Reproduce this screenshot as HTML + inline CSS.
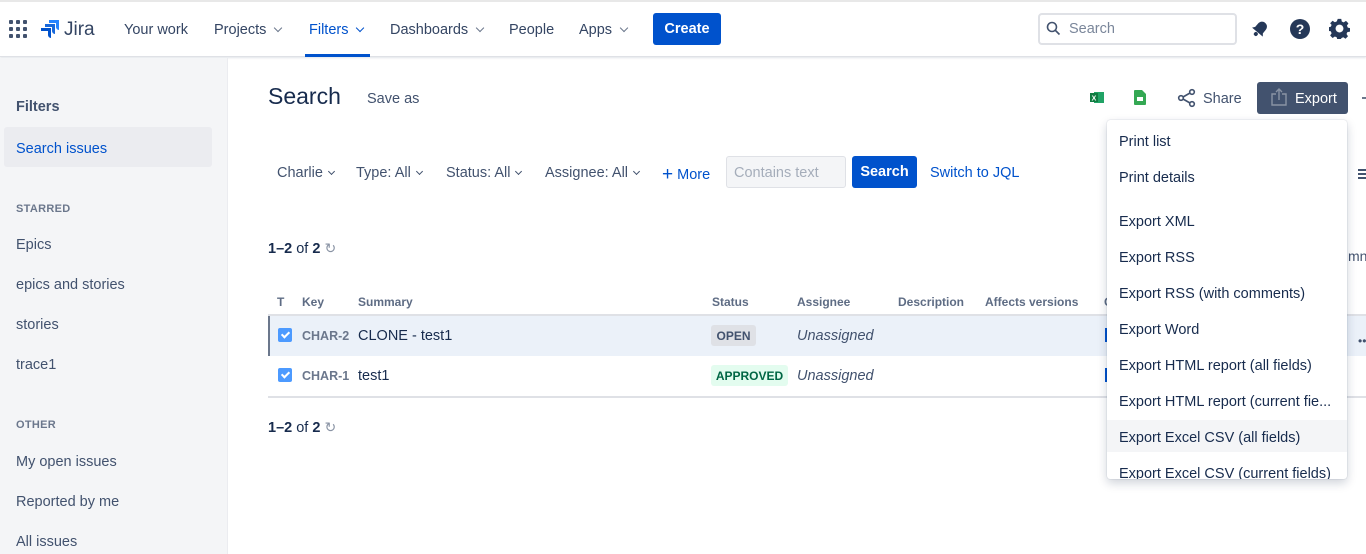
<!DOCTYPE html>
<html><head><meta charset="utf-8"><style>
*{box-sizing:border-box;margin:0;padding:0}
body{width:1366px;height:554px;overflow:hidden;background:#fff;font-family:"Liberation Sans",sans-serif;color:#172b4d;position:relative;font-size:14px}
.a{position:absolute;white-space:nowrap}
.hdr{position:absolute;left:0;top:0;width:1366px;height:57px;background:#fff;border-bottom:1px solid #dfe1e6;box-shadow:0 1px 2px rgba(9,30,66,.12);border-top:2px solid #e8e8e8}
.nav{font-size:14.5px;color:#344563;top:22px}
.chev{display:inline-block;width:6px;height:6px;border-right:1.6px solid #6b778c;border-bottom:1.6px solid #6b778c;transform:rotate(45deg);margin-left:9px;position:relative;top:-3px}
.side{position:absolute;left:0;top:58px;width:228px;height:496px;background:#f4f5f7;border-right:1px solid #ebecf0}
.si{left:16px;font-size:14.5px;color:#42526e;transform:translateY(1px)}
.sh{left:16px;font-size:11px;font-weight:bold;color:#6b778c;letter-spacing:.3px;transform:translateY(1px)}
.fl{font-size:14.5px;color:#42526e;top:165px}
.fl .chev{border-color:#42526e;width:5px;height:5px;margin-left:6px}
.th{top:295px;font-size:12px;font-weight:bold;color:#5e6c84}
.dd{position:absolute;left:1107px;top:120px;width:240px;height:359px;background:#fff;border-radius:3px;box-shadow:0 4px 10px rgba(9,30,66,.2),0 0 1px rgba(9,30,66,.3);overflow:hidden}
.di{position:absolute;left:12px;font-size:14.5px;color:#172b4d;transform:translateY(1px)}
.cb{position:absolute;width:14px;height:14px;background:#4c9aff;border-radius:2px}
.cb:after{content:"";position:absolute;left:4.5px;top:2px;width:3px;height:6px;border-right:2px solid #fff;border-bottom:2px solid #fff;transform:rotate(45deg)}
</style></head><body>
<div class="hdr"></div>
<svg class="a" style="left:9px;top:20px" width="18" height="18" viewBox="0 0 18 18" fill="#42526e"><rect x="0" y="0" width="4" height="4" rx="1"/><rect x="7" y="0" width="4" height="4" rx="1"/><rect x="14" y="0" width="4" height="4" rx="1"/><rect x="0" y="7" width="4" height="4" rx="1"/><rect x="7" y="7" width="4" height="4" rx="1"/><rect x="14" y="7" width="4" height="4" rx="1"/><rect x="0" y="14" width="4" height="4" rx="1"/><rect x="7" y="14" width="4" height="4" rx="1"/><rect x="14" y="14" width="4" height="4" rx="1"/></svg>
<svg class="a" style="left:40px;top:19px" width="20" height="20" viewBox="0 0 20 20" fill="#2684ff"><path d="M9 1h10v10a3 3 0 0 1-3-3V4H9z"/><path d="M5 5h10v10a3 3 0 0 1-3-3V8H5z" fill="#1868db"/><path d="M1 9h10v10a3 3 0 0 1-3-3v-4H1z" fill="#0052cc"/></svg>
<div class="a" style="left:64px;top:19px;font-size:19px;color:#344563">Jira</div>
<div class="a nav" style="left:124px">Your work</div>
<div class="a nav" style="left:214px">Projects<span class="chev"></span></div>
<div class="a nav" style="left:309px;color:#0052cc">Filters<span class="chev" style="border-color:#0052cc"></span></div>
<div class="a" style="left:305px;top:54px;width:65px;height:3px;background:#0052cc"></div>
<div class="a nav" style="left:390px">Dashboards<span class="chev"></span></div>
<div class="a nav" style="left:509px">People</div>
<div class="a nav" style="left:579px">Apps<span class="chev"></span></div>
<div class="a" style="left:653px;top:13px;width:68px;height:32px;background:#0052cc;border-radius:3px;color:#fff;font-size:14.5px;font-weight:bold;text-align:center;line-height:33px">Create</div>
<div class="a" style="left:1038px;top:13px;width:199px;height:32px;border:2px solid #dfe1e6;border-radius:4px;background:#fff"></div>
<svg class="a" style="left:1046px;top:21px" width="15" height="15" viewBox="0 0 15 15" fill="none" stroke="#42526e" stroke-width="1.6"><circle cx="6" cy="6" r="4.5"/><path d="M9.5 9.5l4 4"/></svg>
<div class="a" style="left:1069px;top:21px;font-size:14.5px;color:#7a869a">Search</div>
<svg class="a" style="left:1250px;top:19px" width="20" height="20" viewBox="0 0 20 20" fill="#253858"><g transform="rotate(40 10 10)"><path d="M10 2c3.3 0 5 2.5 5 5.5v4l2 2.5H3l2-2.5v-4C5 4.5 6.7 2 10 2z"/><circle cx="10" cy="16.5" r="2"/></g></svg>
<svg class="a" style="left:1289px;top:18px" width="22" height="22" viewBox="0 0 22 22"><circle cx="11" cy="11" r="10" fill="#253858"/><text x="11" y="16" fill="#fff" font-family="Liberation Sans" font-weight="bold" font-size="14" text-anchor="middle">?</text></svg>
<svg class="a" style="left:1329px;top:18px" width="21" height="21" viewBox="0 0 24 24"><path fill="#253858" d="M10 1h4l.6 3 2.2 1 2.6-1.7 2.8 2.8L20.5 8.7l1 2.3 2.5.5v4l-3 .6-1 2.2 1.7 2.6-2.8 2.8-2.6-1.7-2.2 1-.6 2h-4l-.6-2.9-2.2-1-2.6 1.7-2.8-2.8 1.7-2.6-1-2.2-3-.6v-4l3-.6 1-2.2L1.3 6l2.8-2.8 2.6 1.7 2.2-1z"/><circle cx="12" cy="12" r="4.5" fill="#fff"/></svg>

<div class="side"></div>
<div class="a" style="left:16px;top:99px;font-size:14.5px;font-weight:bold;color:#42526e">Filters</div>
<div class="a" style="left:4px;top:127px;width:208px;height:40px;background:#ebecf0;border-radius:3px"></div>
<div class="a si" style="top:140px;color:#0052cc">Search issues</div>
<div class="a sh" style="top:202px">STARRED</div>
<div class="a si" style="top:236px">Epics</div>
<div class="a si" style="top:276px">epics and stories</div>
<div class="a si" style="top:316px">stories</div>
<div class="a si" style="top:356px">trace1</div>
<div class="a sh" style="top:418px">OTHER</div>
<div class="a si" style="top:453px">My open issues</div>
<div class="a si" style="top:493px">Reported by me</div>
<div class="a si" style="top:533px">All issues</div>

<div class="a" style="left:268px;top:83px;font-size:23px;color:#172b4d">Search</div>
<div class="a" style="left:367px;top:91px;font-size:14.5px;color:#42526e">Save as</div>
<svg class="a" style="left:1090px;top:91px" width="14" height="13" viewBox="0 0 14 13"><rect x="4" y="1" width="10" height="11" fill="#21a366"/><rect x="0" y="2" width="8" height="9" fill="#107c41"/><text x="4" y="9.5" font-size="7" fill="#fff" font-family="Liberation Sans" font-weight="bold" text-anchor="middle">X</text></svg>
<svg class="a" style="left:1134px;top:90px" width="12" height="15" viewBox="0 0 12 15"><path d="M0 1a1 1 0 0 1 1-1h7l4 4v10a1 1 0 0 1-1 1H1a1 1 0 0 1-1-1z" fill="#34a853"/><rect x="3" y="7" width="6" height="4" fill="#fff"/></svg>
<svg class="a" style="left:1177px;top:88px" width="20" height="20" viewBox="0 0 20 20" fill="none" stroke="#42526e" stroke-width="1.6"><circle cx="15" cy="4" r="2.3"/><circle cx="4" cy="10" r="2.3"/><circle cx="15" cy="16" r="2.3"/><path d="M6 9l7-4M6 11l7 4"/></svg>
<div class="a" style="left:1203px;top:91px;font-size:14.5px;color:#42526e">Share</div>
<div class="a" style="left:1257px;top:82px;width:91px;height:32px;background:#42526e;border-radius:3px"></div>
<svg class="a" style="left:1271px;top:88px" width="16" height="18" viewBox="0 0 16 18" fill="none" stroke="#8993a4" stroke-width="1.4"><path d="M5 6H1v11h14V6h-4M8 12V1M5 4l3-3 3 3"/></svg>
<div class="a" style="left:1295px;top:91px;font-size:14.5px;color:#fff">Export</div>
<div class="a" style="left:1362px;top:97px;width:4px;height:2px;background:#6b778c"></div>

<div class="a fl" style="left:277px">Charlie<span class="chev"></span></div>
<div class="a fl" style="left:356px">Type: All<span class="chev"></span></div>
<div class="a fl" style="left:446px">Status: All<span class="chev"></span></div>
<div class="a fl" style="left:545px">Assignee: All<span class="chev"></span></div>
<div class="a fl" style="left:662px;color:#0052cc;top:163px"><span style="font-size:19px;position:relative;top:1px">+</span> More</div>
<div class="a" style="left:726px;top:156px;width:120px;height:32px;background:#f4f5f7;border:1px solid #dfe1e6;border-radius:3px"></div>
<div class="a" style="left:734px;top:165px;font-size:14.5px;color:#a5adba">Contains text</div>
<div class="a" style="left:852px;top:156px;width:65px;height:32px;background:#0052cc;border-radius:3px;color:#fff;font-weight:bold;font-size:14.5px;text-align:center;line-height:33px">Search</div>
<div class="a" style="left:930px;top:165px;font-size:14.5px;color:#0052cc">Switch to JQL</div>
<div class="a" style="left:1358px;top:169px;width:8px;height:2px;background:#42526e;box-shadow:0 4px 0 #42526e,0 8px 0 #42526e"></div>

<div class="a" style="left:268px;top:240px;font-size:14.5px"><b>1–2</b> of <b>2</b> <span style="color:#8993a4;font-size:14px">↻</span></div>
<div class="a" style="left:1348px;top:248px;font-size:14px;color:#42526e">mn</div>

<div class="a th" style="left:277px">T</div>
<div class="a th" style="left:302px">Key</div>
<div class="a th" style="left:358px">Summary</div>
<div class="a th" style="left:712px">Status</div>
<div class="a th" style="left:797px">Assignee</div>
<div class="a th" style="left:898px">Description</div>
<div class="a th" style="left:985px">Affects versions</div>
<div class="a th" style="left:1104px">C</div>
<div class="a" style="left:268px;top:314px;width:1098px;height:2px;background:#dfe1e6"></div>
<div class="a" style="left:268px;top:316px;width:1098px;height:40px;background:#ebf1f9"></div>
<div class="a" style="left:268px;top:316px;width:2px;height:40px;background:#6b778c"></div>
<div class="cb" style="left:278px;top:328px"></div>
<div class="a" style="left:302px;top:329px;font-size:12.5px;font-weight:bold;color:#6b778c">CHAR-2</div>
<div class="a" style="left:358px;top:328px;font-size:14.5px">CLONE - test1</div>
<div class="a" style="left:711px;top:325px;width:45px;height:21px;background:#dfe1e6;border-radius:3px;font-size:12px;font-weight:bold;color:#42526e;text-align:center;line-height:22px">OPEN</div>
<div class="a" style="left:797px;top:328px;font-size:14.5px;font-style:italic;color:#42526e">Unassigned</div>
<div class="cb" style="left:278px;top:368px"></div>
<div class="a" style="left:302px;top:369px;font-size:12.5px;font-weight:bold;color:#6b778c">CHAR-1</div>
<div class="a" style="left:358px;top:368px;font-size:14.5px">test1</div>
<div class="a" style="left:711px;top:365px;width:77px;height:21px;background:#e3fcef;border-radius:3px;font-size:12px;font-weight:bold;color:#006644;text-align:center;line-height:22px">APPROVED</div>
<div class="a" style="left:797px;top:368px;font-size:14.5px;font-style:italic;color:#42526e">Unassigned</div>
<div class="a" style="left:1105px;top:328px;width:2px;height:14px;background:#0052cc"></div>
<div class="a" style="left:1105px;top:368px;width:2px;height:14px;background:#0052cc"></div>
<div class="a" style="left:1358px;top:334px;font-size:12px;color:#42526e">••</div>
<div class="a" style="left:268px;top:396px;width:1098px;height:2px;background:#dfe1e6"></div>
<div class="a" style="left:268px;top:419px;font-size:14.5px"><b>1–2</b> of <b>2</b> <span style="color:#8993a4;font-size:14px">↻</span></div>

<div class="dd">
<div class="di" style="top:13px">Print list</div>
<div class="di" style="top:49px">Print details</div>
<div class="di" style="top:93px">Export XML</div>
<div class="di" style="top:129px">Export RSS</div>
<div class="di" style="top:165px">Export RSS (with comments)</div>
<div class="di" style="top:201px">Export Word</div>
<div class="di" style="top:237px">Export HTML report (all fields)</div>
<div class="di" style="top:273px">Export HTML report (current fie...</div>
<div class="a" style="left:0;top:300px;width:240px;height:32px;background:#f4f5f7"></div>
<div class="di" style="top:309px">Export Excel CSV (all fields)</div>
<div class="di" style="top:345px">Export Excel CSV (current fields)</div>
</div>
</body></html>
